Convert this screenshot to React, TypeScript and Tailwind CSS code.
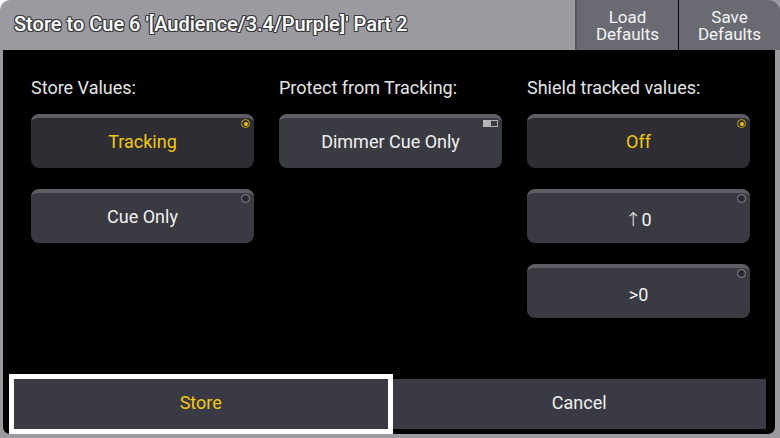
import React from "react";

const YEL = "text-[#f2c811]";

function Radio({ on }: { on: boolean }) {
  return on ? (
    <div className="absolute top-[1px] right-[4px] w-[9px] h-[9px] rounded-full border-[1.5px] border-[#c9a50c] bg-[#2d2d33] flex items-center justify-center">
      <div className="w-[4px] h-[4px] rounded-full bg-[#e6bf0e]" />
    </div>
  ) : (
    <div className="absolute top-[1px] right-[4px] w-[9px] h-[9px] rounded-full border-[1.5px] border-[#8a8a90] bg-[#2a2a30]" />
  );
}

function Toggle() {
  return (
    <div className="absolute top-[2px] right-[4px] w-[15px] h-[7px] border border-[#b4b4b8] bg-[#3a3a42] flex">
      <div className="w-[7px] h-full bg-[#b4b4b8]" />
    </div>
  );
}

function Btn({
  label,
  selected,
  kind,
}: {
  label: React.ReactNode;
  selected?: boolean;
  kind: "radio" | "toggle";
}) {
  return (
    <div
      className={`relative h-[54px] rounded-[8px] border-t-4 border-[#5e5e64] flex items-center justify-center text-[18px] ${
        selected ? "bg-[#2d2d33] text-[#f2c811]" : "bg-[#3a3a42] text-[#f0f0f0]"
      }`}
    >
      <span className="-mt-[3px]">{label}</span>
      {kind === "radio" ? <Radio on={!!selected} /> : <Toggle />}
    </div>
  );
}

export default function App() {
  return (
    <div
      className="w-[780px] h-[438px] bg-[#9a9aa0] flex flex-col rounded-tl-[10px] overflow-hidden"
      style={{ fontFamily: "Roboto, 'Liberation Sans', sans-serif" }}
    >
      <div className="h-[50px] flex shrink-0">
        <div className="flex-1 flex items-center pl-[14px] pb-[3px]">
          <span className="text-[20px] font-medium text-white [text-shadow:-1px_-1px_0_#3a3a3e,1px_-1px_0_#3a3a3e,-1px_1px_0_#3a3a3e,1px_1px_0_#3a3a3e,0_1px_0_#3a3a3e,0_-1px_0_#3a3a3e,1px_0_0_#3a3a3e,-1px_0_0_#3a3a3e]">
            Store to Cue 6 '[Audience/3.4/Purple]' Part 2
          </span>
        </div>
        <div className="w-[2px] bg-[#55555b]" />
        <div className="w-[101px] bg-[#6a6a72] flex flex-col items-center justify-center text-[17px] leading-[17px] text-[#f4f4f4] pt-[2px]">
          <span>Load</span>
          <span>Defaults</span>
        </div>
        <div className="w-[1px] bg-black" />
        <div className="w-[101px] bg-[#6a6a72] rounded-tr-[12px] flex flex-col items-center justify-center text-[17px] leading-[17px] text-[#f4f4f4] pt-[2px]">
          <span>Save</span>
          <span>Defaults</span>
        </div>
      </div>
      <div className="flex-1 bg-black ml-[3px] mr-[5px] mb-[4px] rounded-b-[7px] flex flex-col">
        <div className="grid grid-cols-[223px_223px_223px] gap-x-[25px] pl-[28px] pt-[28px]">
          <div className="flex flex-col">
            <div className="h-[20px] leading-[20px] text-[18px] text-[#e4e4e4] mb-[16px]">Store Values:</div>
            <div className="flex flex-col gap-[21px]">
              <Btn label="Tracking" selected kind="radio" />
              <Btn label="Cue Only" kind="radio" />
            </div>
          </div>
          <div className="flex flex-col">
            <div className="h-[20px] leading-[20px] text-[18px] text-[#e4e4e4] mb-[16px]">Protect from Tracking:</div>
            <div className="flex flex-col gap-[21px]">
              <Btn label="Dimmer Cue Only" kind="toggle" />
            </div>
          </div>
          <div className="flex flex-col">
            <div className="h-[20px] leading-[20px] text-[18px] text-[#e4e4e4] mb-[16px]">Shield tracked values:</div>
            <div className="flex flex-col gap-[21px]">
              <Btn label="Off" selected kind="radio" />
              <Btn
                label={
                  <span className="flex items-center mt-[5px]">
                    <span className="text-[19px] font-light" style={{ fontFamily: "'DejaVu Sans', sans-serif" }}>↑</span>
                    <span>0</span>
                  </span>
                }
                kind="radio"
              />
              <Btn
                label={<span className="block mt-[5px]">&gt;0</span>}
                kind="radio"
              />
            </div>
          </div>
        </div>
        <div className="flex-1" />
        <div className="flex gap-[5px] ml-[11px] mr-[9px] mb-[5px] h-[50px]">
          <div className={`flex-1 bg-[#3a3a44] outline-[5px] outline-solid outline-white flex items-center justify-center pb-[3px] text-[18px] ${YEL}`}>
            Store
          </div>
          <div className="flex-1 bg-[#3a3a44] flex items-center justify-center pb-[3px] text-[18px] text-[#f0f0f0]">
            Cancel
          </div>
        </div>
      </div>
    </div>
  );
}
